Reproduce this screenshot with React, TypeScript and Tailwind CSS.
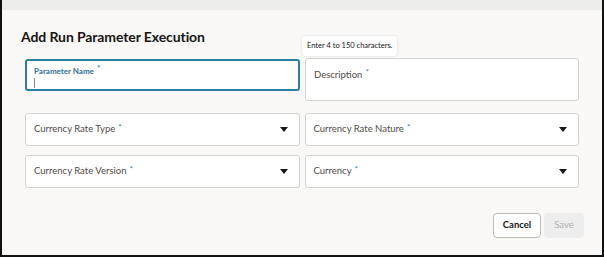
import React from "react";

const Caret = () => (
  <svg width="8" height="5" viewBox="0 0 8 5" className="shrink-0">
    <path d="M0 0 L8 0 L4 5 Z" fill="#161513" />
  </svg>
);

const Req = () => (
  <span className="ml-[3px] text-[8px] leading-none text-[#2a7dab] relative -top-[3px]">*</span>
);

function Select({ label }: { label: string }) {
  return (
    <div className="flex-1 h-[33px] bg-white border border-[#d4d2ce] rounded-[3px] flex items-center pl-[8px] pr-[11px]">
      <span className="flex-1 text-[9.5px] text-[#4f4c48] flex items-center">
        {label}
        <Req />
      </span>
      <Caret />
    </div>
  );
}

export default function App() {
  return (
    <div
      className="w-[604px] h-[257px] bg-[#f9f8f6] border-r-[2px] border-b-[2px] border-l-[2px] border-[#111] flex flex-col overflow-hidden"
      style={{ fontFamily: "Lato, 'Open Sans', 'Liberation Sans', sans-serif" }}
    >
      <div className="h-[10px] bg-[#ededeb] shrink-0" />
      <div className="flex flex-col px-[23px]">
        <h1 className="mt-[18px] ml-[-4px] text-[14px] font-bold text-[#161513] leading-[18px] tracking-[-0.1px]">
          Add Run Parameter Execution
        </h1>
        <div className="relative mt-[13px] flex gap-[5px] items-start">
          <div className="flex-1 h-[32px] bg-white border-[2px] border-[#2c7ea3] rounded-[3px] flex flex-col pl-[7px] pt-[5px]">
            <span className="text-[8px] font-bold text-[#2f6f9a] leading-[10px] flex items-center">
              Parameter Name
              <Req />
            </span>
            <div className="mt-[2px] w-[1px] h-[10px] bg-[#888]" />
          </div>
          <div className="flex-1 mt-[-1px] h-[43px] bg-white border border-[#d4d2ce] rounded-[3px] flex items-center pl-[8px] pb-[9px]">
            <span className="text-[9.5px] text-[#4f4c48] flex items-center">
              Description
              <Req />
            </span>
          </div>
          <div className="absolute left-[277px] top-[-23px] bg-white rounded-[3px] shadow-[0_0_3px_rgba(0,0,0,0.12)] px-[5px] h-[20px] flex items-center text-[7.5px] text-[#161513]">
            Enter 4 to 150 characters.
          </div>
        </div>
        <div className="mt-[12px] flex gap-[5px]">
          <Select label="Currency Rate Type" />
          <Select label="Currency Rate Nature" />
        </div>
        <div className="mt-[9px] flex gap-[5px]">
          <Select label="Currency Rate Version" />
          <Select label="Currency" />
        </div>
        <div className="mt-[25px] flex justify-end gap-[3px] mr-[-5px]">
          <button className="h-[25px] w-[48px] bg-white border border-[#bdbab5] rounded-[4px] text-[9.5px] font-bold text-[#161513]">
            Cancel
          </button>
          <button className="h-[25px] w-[40px] bg-[#ededed] rounded-[4px] text-[9.5px] text-[#b5b3b0]">
            Save
          </button>
        </div>
      </div>
    </div>
  );
}
